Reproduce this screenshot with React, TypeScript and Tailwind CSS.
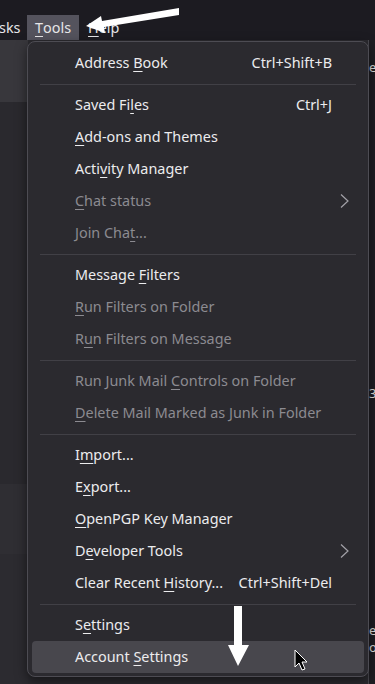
import React from "react";

type Item =
  | { kind: "sep" }
  | { kind: "row"; label: string; shortcut?: string; disabled?: boolean; submenu?: boolean; active?: boolean };

const sep: Item = { kind: "sep" };

const items: Item[] = [
  { kind: "row", label: "Address &Book", shortcut: "Ctrl+Shift+B" },
  sep,
  { kind: "row", label: "Saved Fi&les", shortcut: "Ctrl+J" },
  { kind: "row", label: "&Add-ons and Themes" },
  { kind: "row", label: "Acti&vity Manager" },
  { kind: "row", label: "&Chat status", disabled: true, submenu: true },
  { kind: "row", label: "Join Cha&t...", disabled: true },
  sep,
  { kind: "row", label: "Message &Filters" },
  { kind: "row", label: "&Run Filters on Folder", disabled: true },
  { kind: "row", label: "R&un Filters on Message", disabled: true },
  sep,
  { kind: "row", label: "Run Junk Mail &Controls on Folder", disabled: true },
  { kind: "row", label: "&Delete Mail Marked as Junk in Folder", disabled: true },
  sep,
  { kind: "row", label: "I&mport..." },
  { kind: "row", label: "E&xport..." },
  { kind: "row", label: "&OpenPGP Key Manager" },
  { kind: "row", label: "D&eveloper Tools", submenu: true },
  { kind: "row", label: "Clear Recent &History...", shortcut: "Ctrl+Shift+Del" },
  sep,
  { kind: "row", label: "S&ettings" },
  { kind: "row", label: "Account &Settings", active: true },
];

// "&" marks the access key letter, drawn underlined
function AccessLabel({ text }: { text: string }) {
  const i = text.indexOf("&");
  if (i < 0) return <>{text}</>;
  return (
    <>
      {text.slice(0, i)}
      <span className="underline underline-offset-[3px] decoration-1">{text[i + 1]}</span>
      {text.slice(i + 2)}
    </>
  );
}

function Chevron() {
  return (
    <svg width="9" height="16" viewBox="0 0 9 16" fill="none" stroke="#a3a2a8" strokeWidth="1.2">
      <path d="M1 1.5 L8 8 L1 14.5" />
    </svg>
  );
}

export default function App() {
  return (
    <div
      className="relative w-[375px] h-[684px] overflow-hidden bg-[#2b2a2f] text-[14.4px]"
      style={{ fontFamily: '"Segoe UI", "Noto Sans", sans-serif' }}
    >
      {/* menubar */}
      <div className="h-10 bg-[#1c1b21] flex items-end text-[#e6e6e8]">
        <span className="h-[25px] flex items-center -ml-[1px] w-[28px]">sks</span>
        <span className="h-[25px] px-[8px] flex items-center bg-[#54535d]">
          <AccessLabel text="&Tools" />
        </span>
        <span className="h-[25px] flex items-center ml-[9px]">
          <AccessLabel text="&Help" />
        </span>
      </div>

      {/* page behind the menu */}
      <div className="flex">
        <div className="w-[28px] flex flex-col">
          <div className="h-[62px] bg-[#38373c]" />
          <div className="h-[382px] bg-[#2a292e]" />
          <div className="h-[70px] bg-[#2f2e33]" />
          <div className="flex-1 bg-[#2c2b30]" />
        </div>
        <div className="flex-1" />
        <div className="w-[7px] h-[644px] bg-[#1f1e23] border-l border-[#4a4950] text-[#e0e0e0] text-[13px] leading-none">
          <div className="pt-[21px]">e</div>
          <div className="pt-[313px]">3</div>
          <div className="pt-[224px]">e</div>
          <div className="pt-[4px]">o</div>
        </div>
      </div>

      {/* Tools menu */}
      <div className="absolute left-[27px] top-[41px] w-[342px] h-[636px] rounded-[8px] border border-[#4d4c53] bg-[#2b2a2f] shadow-[0_4px_12px_rgba(0,0,0,0.5)] px-[4px] pt-[5px]">
        {items.map((it, idx) =>
          it.kind === "sep" ? (
            <div key={idx} className="h-[10px] flex items-center px-[8px]">
              <div className="h-px w-full bg-[#414046]" />
            </div>
          ) : (
            <div
              key={idx}
              className={
                "h-8 flex items-center justify-between rounded-[4px] pl-[43px] " +
                (it.submenu ? "pr-[15px] " : "pr-[32px] ") +
                (it.active ? "bg-[#48474d] " : "") +
                (it.disabled ? "text-[#8c8b91]" : "text-[#ececee]")
              }
            >
              <span className="whitespace-nowrap">
                <AccessLabel text={it.label} />
              </span>
              {it.shortcut && <span className="whitespace-nowrap">{it.shortcut}</span>}
              {it.submenu && <Chevron />}
            </div>
          )
        )}
      </div>

      {/* annotation arrows */}
      <svg className="absolute left-0 top-0 pointer-events-none" width="375" height="684">
        <path d="M179 8 L179 15 L104 27 L105 33 L86 26 L101 16 L102 21 Z" fill="#ffffff" />
        <path d="M234 606 L242 606 L242 645 L249 645 L238 666 L228 645 L234 645 Z" fill="#ffffff" />
        <path
          d="M295 650 L295 667 L299 663 L302 670 L305 669 L302 662 L307 662 Z"
          fill="#000000"
          stroke="#ffffff"
          strokeWidth="1"
          strokeLinejoin="round"
        />
      </svg>
    </div>
  );
}
